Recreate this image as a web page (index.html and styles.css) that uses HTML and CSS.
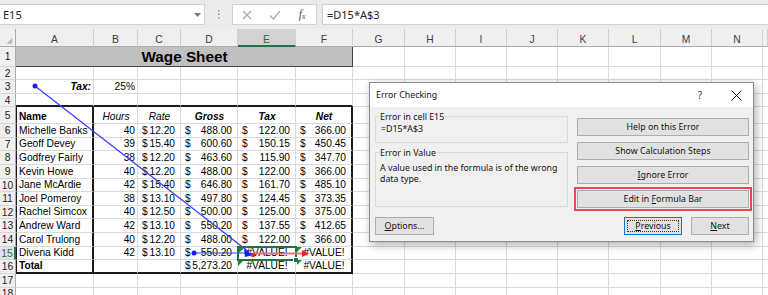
FILE: index.html
```
<!DOCTYPE html>
<html>
<head>
<meta charset="utf-8">
<link rel="stylesheet" href="styles.css">
</head>
<body>
<div class="app">
  <div class="fbar">
    <div class="namebox"><span>E15</span><svg class="dd" width="7" height="4" viewBox="0 0 7 4"><polygon points="0,0 7,0 3.5,4" fill="#7a7a7a"/></svg></div>
    <div class="dots"><svg width="2" height="9" viewBox="0 0 2 9"><rect x="0" y="0" width="1.5" height="1.5" fill="#9a9a9a"/><rect x="0" y="3.5" width="1.5" height="1.5" fill="#9a9a9a"/><rect x="0" y="7" width="1.5" height="1.5" fill="#9a9a9a"/></svg></div>
    <div class="fxbox">
      <span class="fxslot"><svg width="10" height="10" viewBox="0 0 10 10"><path d="M1 1 L9 9 M9 1 L1 9" stroke="#a8a8a8" stroke-width="1.2" fill="none"/></svg></span>
      <span class="fxslot"><svg width="12" height="10" viewBox="0 0 12 10"><path d="M1 5.5 L4.5 9 L11 1" stroke="#a8a8a8" stroke-width="1.2" fill="none"/></svg></span>
      <span class="fxslot fx"><i>f</i><span class="fxx">x</span></span>
    </div>
    <div class="formula">=D15*A$3</div>
  </div>

  <div class="sheet">
    <!-- header row -->
    <div class="corner"><svg width="16" height="18" viewBox="0 0 16 18"><polygon points="13,9 13,15 7,15" fill="#b9b9b9"/></svg></div>
    <div class="ch">A</div><div class="ch">B</div><div class="ch">C</div><div class="ch">D</div><div class="ch sel">E</div><div class="ch">F</div><div class="ch">G</div><div class="ch">H</div><div class="ch">I</div><div class="ch">J</div><div class="ch">K</div><div class="ch">L</div><div class="ch">M</div><div class="ch">N</div><div class="ch"></div>

    <!-- row 1 -->
    <div class="rh">1</div>
    <div class="c title">Wage Sheet</div>
    <div class="c"></div><div class="c"></div><div class="c"></div><div class="c"></div><div class="c"></div><div class="c"></div><div class="c"></div><div class="c"></div><div class="c"></div>

    <!-- row 2 -->
    <div class="rh">2</div>
    <div class="c"></div><div class="c"></div><div class="c"></div><div class="c"></div><div class="c"></div><div class="c"></div><div class="c"></div><div class="c"></div><div class="c"></div><div class="c"></div><div class="c"></div><div class="c"></div><div class="c"></div><div class="c"></div><div class="c"></div>

    <!-- row 3 -->
    <div class="rh">3</div>
    <div class="c r bi">Tax:</div><div class="c r">25%</div>
    <div class="c"></div><div class="c"></div><div class="c"></div><div class="c"></div><div class="c"></div><div class="c"></div><div class="c"></div><div class="c"></div><div class="c"></div><div class="c"></div><div class="c"></div><div class="c"></div><div class="c"></div>

    <!-- row 4 -->
    <div class="rh">4</div>
    <div class="c tb"></div><div class="c tb"></div><div class="c tb"></div><div class="c tb"></div><div class="c tb"></div><div class="c tb"></div>
    <div class="c"></div><div class="c"></div><div class="c"></div><div class="c"></div><div class="c"></div><div class="c"></div><div class="c"></div><div class="c"></div><div class="c"></div>

    <!-- row 5 -->
    <div class="rh">5</div>
    <div class="c tl tr b">Name</div><div class="c ctr i">Hours</div><div class="c ctr i">Rate</div><div class="c ctr bi">Gross</div><div class="c ctr bi">Tax</div><div class="c ctr bi tr">Net</div>
    <div class="c"></div><div class="c"></div><div class="c"></div><div class="c"></div><div class="c"></div><div class="c"></div><div class="c"></div><div class="c"></div><div class="c"></div>

    <!-- row 6 -->
    <div class="rh">6</div>
    <div class="c tl tr">Michelle Banks</div><div class="c r">40</div>
    <div class="c acc"><span>$</span><span>12.20</span></div><div class="c acc"><span>$</span><span>488.00</span></div><div class="c acc"><span>$</span><span>122.00</span></div><div class="c acc tr"><span>$</span><span>366.00</span></div>
    <div class="c"></div><div class="c"></div><div class="c"></div><div class="c"></div><div class="c"></div><div class="c"></div><div class="c"></div><div class="c"></div><div class="c"></div>

    <!-- row 7 -->
    <div class="rh">7</div>
    <div class="c tl tr">Geoff Devey</div><div class="c r">39</div>
    <div class="c acc"><span>$</span><span>15.40</span></div><div class="c acc"><span>$</span><span>600.60</span></div><div class="c acc"><span>$</span><span>150.15</span></div><div class="c acc tr"><span>$</span><span>450.45</span></div>
    <div class="c"></div><div class="c"></div><div class="c"></div><div class="c"></div><div class="c"></div><div class="c"></div><div class="c"></div><div class="c"></div><div class="c"></div>

    <!-- row 8 -->
    <div class="rh">8</div>
    <div class="c tl tr">Godfrey Fairly</div><div class="c r">38</div>
    <div class="c acc"><span>$</span><span>12.20</span></div><div class="c acc"><span>$</span><span>463.60</span></div><div class="c acc"><span>$</span><span>115.90</span></div><div class="c acc tr"><span>$</span><span>347.70</span></div>
    <div class="c"></div><div class="c"></div><div class="c"></div><div class="c"></div><div class="c"></div><div class="c"></div><div class="c"></div><div class="c"></div><div class="c"></div>

    <!-- row 9 -->
    <div class="rh">9</div>
    <div class="c tl tr">Kevin Howe</div><div class="c r">40</div>
    <div class="c acc"><span>$</span><span>12.20</span></div><div class="c acc"><span>$</span><span>488.00</span></div><div class="c acc"><span>$</span><span>122.00</span></div><div class="c acc tr"><span>$</span><span>366.00</span></div>
    <div class="c"></div><div class="c"></div><div class="c"></div><div class="c"></div><div class="c"></div><div class="c"></div><div class="c"></div><div class="c"></div><div class="c"></div>

    <!-- row 10 -->
    <div class="rh">10</div>
    <div class="c tl tr">Jane McArdie</div><div class="c r">42</div>
    <div class="c acc"><span>$</span><span>15.40</span></div><div class="c acc"><span>$</span><span>646.80</span></div><div class="c acc"><span>$</span><span>161.70</span></div><div class="c acc tr"><span>$</span><span>485.10</span></div>
    <div class="c"></div><div class="c"></div><div class="c"></div><div class="c"></div><div class="c"></div><div class="c"></div><div class="c"></div><div class="c"></div><div class="c"></div>

    <!-- row 11 -->
    <div class="rh">11</div>
    <div class="c tl tr">Joel Pomeroy</div><div class="c r">38</div>
    <div class="c acc"><span>$</span><span>13.10</span></div><div class="c acc"><span>$</span><span>497.80</span></div><div class="c acc"><span>$</span><span>124.45</span></div><div class="c acc tr"><span>$</span><span>373.35</span></div>
    <div class="c"></div><div class="c"></div><div class="c"></div><div class="c"></div><div class="c"></div><div class="c"></div><div class="c"></div><div class="c"></div><div class="c"></div>

    <!-- row 12 -->
    <div class="rh">12</div>
    <div class="c tl tr">Rachel Simcox</div><div class="c r">40</div>
    <div class="c acc"><span>$</span><span>12.50</span></div><div class="c acc"><span>$</span><span>500.00</span></div><div class="c acc"><span>$</span><span>125.00</span></div><div class="c acc tr"><span>$</span><span>375.00</span></div>
    <div class="c"></div><div class="c"></div><div class="c"></div><div class="c"></div><div class="c"></div><div class="c"></div><div class="c"></div><div class="c"></div><div class="c"></div>

    <!-- row 13 -->
    <div class="rh">13</div>
    <div class="c tl tr">Andrew Ward</div><div class="c r">42</div>
    <div class="c acc"><span>$</span><span>13.10</span></div><div class="c acc"><span>$</span><span>550.20</span></div><div class="c acc"><span>$</span><span>137.55</span></div><div class="c acc tr"><span>$</span><span>412.65</span></div>
    <div class="c"></div><div class="c"></div><div class="c"></div><div class="c"></div><div class="c"></div><div class="c"></div><div class="c"></div><div class="c"></div><div class="c"></div>

    <!-- row 14 -->
    <div class="rh">14</div>
    <div class="c tl tr">Carol Trulong</div><div class="c r">40</div>
    <div class="c acc"><span>$</span><span>12.20</span></div><div class="c acc"><span>$</span><span>488.00</span></div><div class="c acc"><span>$</span><span>122.00</span></div><div class="c acc tr"><span>$</span><span>366.00</span></div>
    <div class="c"></div><div class="c"></div><div class="c"></div><div class="c"></div><div class="c"></div><div class="c"></div><div class="c"></div><div class="c"></div><div class="c"></div>

    <!-- row 15 -->
    <div class="rh sel">15</div>
    <div class="c tl tr">Divena Kidd</div><div class="c r">42</div>
    <div class="c acc"><span>$</span><span>13.10</span></div><div class="c acc"><span>$</span><span>550.20</span></div><div class="c err">#VALUE!</div><div class="c err tr">#VALUE!</div>
    <div class="c"></div><div class="c"></div><div class="c"></div><div class="c"></div><div class="c"></div><div class="c"></div><div class="c"></div><div class="c"></div><div class="c"></div>

    <!-- row 16 -->
    <div class="rh">16</div>
    <div class="c tl tr tb b">Total</div><div class="c tb"></div><div class="c tb"></div>
    <div class="c acc tb"><span>$</span><span>5,273.20</span></div><div class="c err tb">#VALUE!</div><div class="c err tb tr">#VALUE!</div>
    <div class="c"></div><div class="c"></div><div class="c"></div><div class="c"></div><div class="c"></div><div class="c"></div><div class="c"></div><div class="c"></div><div class="c"></div>

    <!-- row 17 -->
    <div class="rh">17</div>
    <div class="c"></div><div class="c"></div><div class="c"></div><div class="c"></div><div class="c"></div><div class="c"></div><div class="c"></div><div class="c"></div><div class="c"></div><div class="c"></div><div class="c"></div><div class="c"></div><div class="c"></div><div class="c"></div><div class="c"></div>

    <!-- row 18 -->
    <div class="rh rh-last">18</div>
    <div class="c"></div><div class="c"></div><div class="c"></div><div class="c"></div><div class="c"></div><div class="c"></div><div class="c"></div><div class="c"></div><div class="c"></div><div class="c"></div><div class="c"></div><div class="c"></div><div class="c"></div><div class="c"></div><div class="c"></div>
  </div>

  <svg class="overlay" width="768" height="295" viewBox="0 0 768 295">
    <!-- selection of E15 -->
    <rect x="238" y="247" width="58" height="13" fill="none" stroke="#217346" stroke-width="2"/>
    <rect x="293.5" y="257.5" width="5" height="5" fill="#217346" stroke="#fff" stroke-width="1"/>
    <!-- error indicators -->
    <polygon points="239,248 244,248 239,253" fill="#1f8a3c"/>
    <polygon points="297,247 302,247 297,252" fill="#1f8a3c"/>
    <polygon points="238,261 243,261 238,266" fill="#1f8a3c"/>
    <polygon points="297,260 302,260 297,265" fill="#1f8a3c"/>
    <!-- precedent tracers -->
    <line x1="35" y1="86" x2="249" y2="252" stroke="#3b3bff" stroke-width="1.2"/>
    <circle cx="35" cy="86" r="2.5" fill="#1a1aff"/>
    <line x1="194" y1="253" x2="247" y2="253" stroke="#3b3bff" stroke-width="1.2"/>
    <circle cx="194" cy="253" r="2.5" fill="#1a1aff"/>
    <polygon points="253,255 244,249 245,257" fill="#1a1aff"/>
    <!-- error tracer -->
    <line x1="254" y1="253.5" x2="303" y2="253.5" stroke="#f07070" stroke-width="2"/>
    <circle cx="253" cy="255" r="2.2" fill="#ff2020"/>
    <polygon points="309,253.5 302,250 302,257" fill="#ff2020"/>
  </svg>

  <div class="dialog">
    <div class="dlg-title">
      <span class="dlg-caption">Error Checking</span>
      <span class="dlg-help">?</span>
      <span class="dlg-close"><svg width="11" height="11" viewBox="0 0 11 11"><path d="M0.5 0.5 L10.5 10.5 M10.5 0.5 L0.5 10.5" stroke="#111" stroke-width="1" fill="none"/></svg></span>
    </div>
    <div class="dlg-body">
      <div class="dlg-left">
        <div class="group g1">
          <div class="group-label">Error in cell E15</div>
          <div class="group-text">=D15*A$3</div>
        </div>
        <div class="group g2">
          <div class="group-label">Error in Value</div>
          <div class="group-text desc">A value used in the formula is of the wrong<br>data type.</div>
        </div>
      </div>
      <div class="dlg-right">
        <button class="btn">Help on this Error</button>
        <button class="btn">Show Calculation Steps</button>
        <button class="btn"><u>I</u>gnore Error</button>
        <button class="btn hl">Edit in <u>F</u>ormula Bar</button>
      </div>
      <div class="dlg-foot-left"><button class="btn opt"><u>O</u>ptions...</button></div>
      <div class="dlg-foot-right">
        <button class="btn nav prev"><u>P</u>revious</button>
        <button class="btn nav"><u>N</u>ext</button>
      </div>
    </div>
  </div>
</div>
</body>
</html>
```

FILE: styles.css
```
html, body {
  margin: 0;
  padding: 0;
}
body {
  width: 768px;
  height: 295px;
  overflow: hidden;
  background: #fff;
  font-family: "Liberation Sans", Arial, sans-serif;
}
.app {
  position: relative;
  width: 768px;
  height: 295px;
  overflow: hidden;
}

/* formula bar */
.fbar {
  height: 29px;
  box-sizing: border-box;
  padding-top: 4px;
  background: #ebebeb;
  display: flex;
  align-items: flex-start;
  font-family: "Noto Sans", "Liberation Sans", sans-serif;
  font-size: 11px;
  color: #222;
}
.namebox {
  width: 205px;
  height: 21px;
  box-sizing: border-box;
  background: #fff;
  border: 1px solid #d2d2d2;
  border-left: none;
  display: flex;
  align-items: center;
  padding-left: 3px;
}
.namebox .dd {
  margin-left: auto;
  margin-right: 3px;
}
.dots {
  width: 27px;
  height: 21px;
  display: flex;
  align-items: center;
  justify-content: center;
}
.fxbox {
  width: 85px;
  height: 21px;
  box-sizing: border-box;
  background: #fff;
  border: 1px solid #d2d2d2;
  display: flex;
  align-items: center;
}
.fxslot {
  width: 28px;
  display: flex;
  justify-content: center;
  align-items: center;
}
.fx {
  font-family: "Liberation Serif", serif;
  color: #555;
  font-size: 12px;
}
.fx .fxx {
  font-style: italic;
  font-size: 8px;
  margin-top: 4px;
}
.formula {
  margin-left: 5px;
  flex: 1;
  height: 21px;
  box-sizing: border-box;
  background: #fff;
  border: 1px solid #d2d2d2;
  border-right: none;
  display: flex;
  align-items: center;
  padding-left: 4px;
}

/* sheet grid */
.sheet {
  display: grid;
  grid-template-columns: 16px 78px 44px 43px 57px 58px 57px 52px 51px 51px 51px 51px 52px 51px 51px 5px;
  grid-template-rows: 18px 20px 13px 14px 13px 17px 14px 13px 14px 14px 13px 14px 13px 14px 14px 13px 14px 14px 14px;
  font-size: 10.2px;
  color: #000;
}
.corner {
  background: #efefef;
  border-right: 1px solid #ababab;
  border-bottom: 1px solid #ababab;
  box-sizing: border-box;
  display: flex;
}
.ch {
  background: #efefef;
  border-right: 1px solid #d0d0d0;
  border-bottom: 1px solid #ababab;
  box-sizing: border-box;
  display: flex;
  align-items: center;
  justify-content: center;
  padding-top: 3px;
  color: #3c3c3c;
  font-size: 10.3px;
}
.ch.sel {
  background: #d3d3d3;
  border-bottom: 2px solid #217346;
  padding-top: 4px;
  color: #1e6b41;
}
.rh {
  background: #efefef;
  border-right: 1px solid #ababab;
  border-bottom: 1px solid #d6d6d6;
  box-sizing: border-box;
  display: flex;
  align-items: center;
  justify-content: center;
  color: #222;
  font-size: 10.3px;
}
.rh-last {
  align-items: flex-start;
  line-height: 10px;
  padding-top: 1px;
}
.rh.sel {
  background: #e2e2e2;
  border-right: 2px solid #217346;
  color: #1e6b41;
}
.c {
  border-right: 1px solid #dadada;
  border-bottom: 1px solid #dadada;
  box-sizing: border-box;
  display: flex;
  align-items: flex-end;
  line-height: 12px;
  padding: 0 2px 0 3px;
  white-space: nowrap;
  overflow: hidden;
}
.title {
  grid-column: span 6;
  background: #c0c0c0;
  border-right: 1px solid #444;
  border-bottom: 1px solid #444;
  justify-content: center;
  font-weight: bold;
  font-size: 15.3px;
  line-height: 18px;
}
.r { justify-content: flex-end; }
.ctr { justify-content: center; }
.b { font-weight: bold; }
.i { font-style: italic; }
.bi { font-weight: bold; font-style: italic; }
.acc {
  justify-content: space-between;
  padding: 0 5px 0 4px;
}
.err { justify-content: center; }
.tb { border-bottom: 2px solid #1c1c1c; }
.tr { border-right: 2px solid #1c1c1c; }
.tl { border-left: 1px solid #1c1c1c; padding-left: 2px; }

.overlay {
  position: absolute;
  left: 0;
  top: 0;
  pointer-events: none;
}

/* dialog */
.dialog {
  position: absolute;
  left: 369px;
  top: 82px;
  width: 385px;
  height: 160px;
  box-sizing: border-box;
  border: 1px solid #8c8c8c;
  background: #f0f0f0;
  box-shadow: 2px 3px 9px rgba(0, 0, 0, 0.32);
  font-family: "Noto Sans", "Liberation Sans", sans-serif;
  font-size: 8.8px;
  color: #111;
}
.dlg-title {
  height: 24px;
  background: #fff;
  display: flex;
  align-items: center;
  padding: 0 2px 0 6px;
}
.dlg-help {
  margin-left: auto;
  width: 12px;
  text-align: center;
  font-size: 10px;
  color: #333;
}
.dlg-close {
  width: 30px;
  margin-left: 15px;
  display: flex;
  justify-content: center;
}
.dlg-body {
  display: grid;
  grid-template-columns: 193px 172px;
  column-gap: 9px;
  row-gap: 9px;
  padding-left: 5px;
}
.dlg-left {
  display: flex;
  flex-direction: column;
  gap: 9px;
  padding-top: 9px;
}
.group {
  border: 1px solid #d9d9d9;
  box-sizing: border-box;
}
.g1 { height: 27px; }
.g2 { height: 55px; }
.group-label {
  width: fit-content;
  margin: -6px 0 0 3px;
  padding: 0 1px;
  background: #f0f0f0;
  line-height: 12px;
}
.group-text {
  padding-left: 5px;
  line-height: 12px;
  white-space: nowrap;
}
.desc {
  margin-top: 4px;
  padding-left: 4px;
  line-height: 11px;
}
.dlg-right {
  display: flex;
  flex-direction: column;
  gap: 6px;
  padding-top: 11px;
}
.btn {
  height: 18px;
  box-sizing: border-box;
  margin: 0;
  padding: 0;
  background: #e1e1e1;
  border: 1px solid #adadad;
  font-family: "Noto Sans", "Liberation Sans", sans-serif;
  font-size: 8.8px;
  color: #111;
  line-height: 14px;
}
.hl {
  outline: 2px solid #ec4a4a;
  outline-offset: 1px;
}
.opt { width: 59px; }
.dlg-foot-right {
  display: flex;
  justify-content: flex-end;
  gap: 9px;
}
.nav { width: 58px; }
.prev {
  border-color: #0078d7;
  outline: 1px dotted #333;
  outline-offset: -4px;
}
```
